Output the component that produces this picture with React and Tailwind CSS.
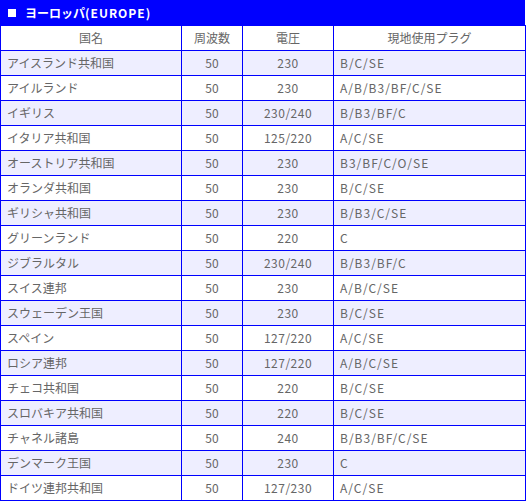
import React from "react";

const rows = [
  ["アイスランド共和国", "50", "230", "B/C/SE"],
  ["アイルランド", "50", "230", "A/B/B3/BF/C/SE"],
  ["イギリス", "50", "230/240", "B/B3/BF/C"],
  ["イタリア共和国", "50", "125/220", "A/C/SE"],
  ["オーストリア共和国", "50", "230", "B3/BF/C/O/SE"],
  ["オランダ共和国", "50", "230", "B/C/SE"],
  ["ギリシャ共和国", "50", "230", "B/B3/C/SE"],
  ["グリーンランド", "50", "220", "C"],
  ["ジブラルタル", "50", "230/240", "B/B3/BF/C"],
  ["スイス連邦", "50", "230", "A/B/C/SE"],
  ["スウェーデン王国", "50", "230", "B/C/SE"],
  ["スペイン", "50", "127/220", "A/C/SE"],
  ["ロシア連邦", "50", "127/220", "A/B/C/SE"],
  ["チェコ共和国", "50", "220", "B/C/SE"],
  ["スロバキア共和国", "50", "220", "B/C/SE"],
  ["チャネル諸島", "50", "240", "B/B3/BF/C/SE"],
  ["デンマーク王国", "50", "230", "C"],
  ["ドイツ連邦共和国", "50", "127/230", "A/C/SE"],
];

export default function App() {
  return (
    <div
      className="w-[526px] bg-white text-[12px] text-[#666666]"
      style={{ fontFamily: '"Noto Sans CJK JP", "Noto Sans", sans-serif' }}
    >
      <div className="flex h-[25px] w-[525px] items-center bg-[#0000ff] pl-[8px] text-[12px] font-bold text-white">
        <span className="mr-[9px] block h-[8px] w-[8px] bg-white" />
        <span>
          ヨーロッパ<span className="tracking-[1px]">(EUROPE)</span>
        </span>
      </div>
      <table className="w-[525px] table-fixed border-collapse">
        <colgroup>
          <col className="w-[181px]" />
          <col className="w-[61px]" />
          <col className="w-[91px]" />
          <col className="w-[192px]" />
        </colgroup>
        <thead>
          <tr className="h-[25px] bg-white">
            <th className="border border-[#0000ff] p-0 text-center font-normal">国名</th>
            <th className="border border-[#0000ff] p-0 text-center font-normal">周波数</th>
            <th className="border border-[#0000ff] p-0 text-center font-normal">電圧</th>
            <th className="border border-[#0000ff] p-0 text-center font-normal">現地使用プラグ</th>
          </tr>
        </thead>
        <tbody>
          {rows.map((r, i) => (
            <tr key={i} className={i % 2 === 0 ? "h-[25px] bg-[#eeeeff]" : "h-[25px] bg-white"}>
              <td className="border border-[#0000ff] py-0 pl-[6px] text-left">{r[0]}</td>
              <td className="border border-[#0000ff] p-0 text-center">{r[1]}</td>
              <td className="border border-[#0000ff] p-0 text-center tracking-[0.5px]">{r[2]}</td>
              <td className="border border-[#0000ff] py-0 pl-[6px] text-left tracking-[1px]">{r[3]}</td>
            </tr>
          ))}
        </tbody>
      </table>
    </div>
  );
}
